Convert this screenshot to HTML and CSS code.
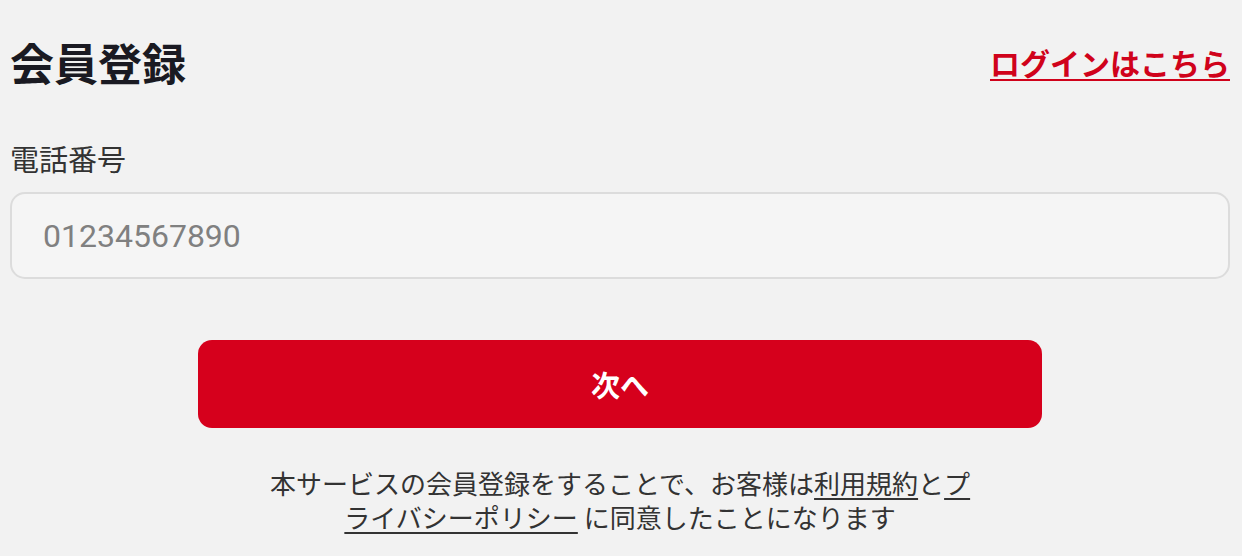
FILE: index.html
```html
<!DOCTYPE html>
<html lang="ja">
<head>
<meta charset="utf-8">
<title>会員登録</title>
<link rel="stylesheet" href="styles.css">
</head>
<body>
<main class="page">
  <header class="head">
    <h1 class="title">会員登録</h1>
    <a class="login" href="#">ログインはこちら</a>
  </header>
  <form class="form">
    <label class="label" for="tel">電話番号</label>
    <input class="input" id="tel" type="tel" placeholder="01234567890">
    <button class="btn" type="button">次へ</button>
    <p class="note">本サービスの会員登録をすることで、お客様は<a href="#">利用規約</a>と<a href="#">プライバシーポリシー</a> に同意したことになります</p>
  </form>
</main>
</body>
</html>
```
FILE: styles.css
```css
* { box-sizing: border-box; }
html, body { margin: 0; padding: 0; background: #f2f2f2; }
body {
  font-family: "Noto Sans CJK JP", "Noto Sans", sans-serif;
  color: #333;
}
.page {
  width: 1242px;
  height: 556px;
  padding: 0 12px 0 10px;
  overflow: hidden;
}
.head {
  display: flex;
  justify-content: space-between;
  align-items: center;
  padding-top: 20px;
  height: 104px;
}
.title {
  margin: 0;
  font-size: 44px;
  line-height: 60px;
  font-weight: 700;
  color: #1a1a22;
}
.login {
  font-size: 30px;
  line-height: 40px;
  font-weight: 700;
  color: #d0021b;
  text-decoration: underline;
  text-underline-offset: 4px;
  text-decoration-thickness: 2px;
}
.form {
  display: flex;
  flex-direction: column;
  padding-top: 34px;
}
.label {
  font-size: 29px;
  line-height: 40px;
  color: #333;
}
.input {
  margin-top: 14px;
  height: 87px;
  width: 100%;
  border: 2px solid #dcdcdc;
  border-radius: 15px;
  background: #f5f5f5;
  padding: 0 31px;
  font-family: Roboto, "Noto Sans", sans-serif;
  font-size: 32px;
  color: #333;
  outline: none;
}
.input::placeholder { color: #808080; }
.btn {
  align-self: center;
  margin-top: 61px;
  width: 844px;
  height: 88px;
  border: none;
  border-radius: 14px;
  background: #d6001c;
  color: #fff;
  font-family: "Noto Sans CJK JP", sans-serif;
  font-size: 29px;
  font-weight: 700;
}
.note {
  align-self: center;
  width: 720px;
  margin: 38px 0 0;
  text-align: center;
  font-size: 26px;
  line-height: 34px;
  color: #333;
}
.note a {
  color: #333;
  text-decoration: underline;
  text-underline-offset: 4px;
}
```
